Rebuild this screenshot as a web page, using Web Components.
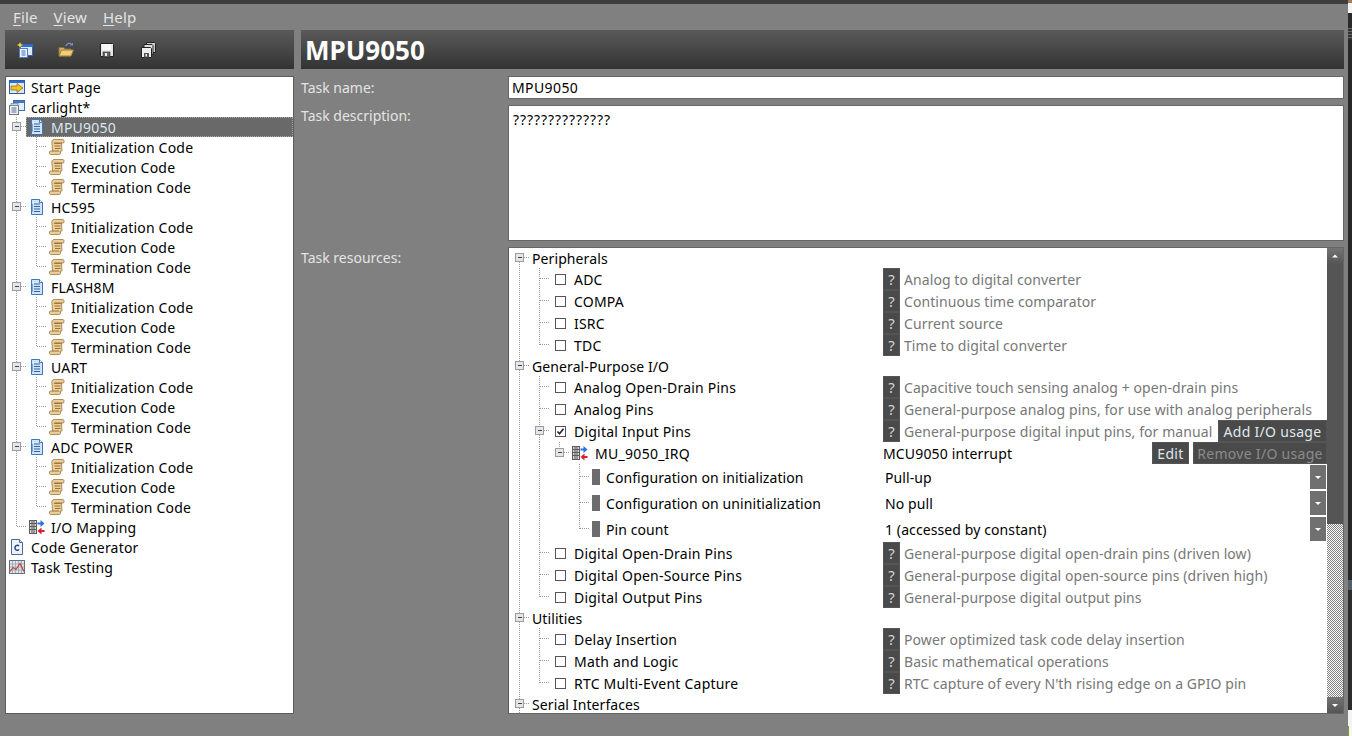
<!DOCTYPE html>
<html>
<head>
<meta charset="utf-8">
<title>MPU9050</title>
<style>
  html, body { margin: 0; height: 100%; overflow: hidden; background: #222; }
  body { font: 14px/20px "Noto Sans", "Liberation Sans", sans-serif; }
</style>
</head>
<body>
<ide-window>
  <ide-menu slot="menu"></ide-menu>
  <ide-toolbar slot="toolbar"></ide-toolbar>
  <ide-title slot="title">MPU9050</ide-title>
  <project-tree slot="tree">
    <tree-row icon="start">Start Page</tree-row>
    <tree-row icon="project">carlight*</tree-row>
    <tree-row guides="+" icon="doc" selected>MPU9050</tree-row>
    <tree-row guides="vT" icon="scroll">Initialization Code</tree-row>
    <tree-row guides="vT" icon="scroll">Execution Code</tree-row>
    <tree-row guides="vL" icon="scroll">Termination Code</tree-row>
    <tree-row guides="+" icon="doc">HC595</tree-row>
    <tree-row guides="vT" icon="scroll">Initialization Code</tree-row>
    <tree-row guides="vT" icon="scroll">Execution Code</tree-row>
    <tree-row guides="vL" icon="scroll">Termination Code</tree-row>
    <tree-row guides="+" icon="doc">FLASH8M</tree-row>
    <tree-row guides="vT" icon="scroll">Initialization Code</tree-row>
    <tree-row guides="vT" icon="scroll">Execution Code</tree-row>
    <tree-row guides="vL" icon="scroll">Termination Code</tree-row>
    <tree-row guides="+" icon="doc">UART</tree-row>
    <tree-row guides="vT" icon="scroll">Initialization Code</tree-row>
    <tree-row guides="vT" icon="scroll">Execution Code</tree-row>
    <tree-row guides="vL" icon="scroll">Termination Code</tree-row>
    <tree-row guides="+" icon="doc">ADC POWER</tree-row>
    <tree-row guides="vT" icon="scroll">Initialization Code</tree-row>
    <tree-row guides="vT" icon="scroll">Execution Code</tree-row>
    <tree-row guides="vL" icon="scroll">Termination Code</tree-row>
    <tree-row guides="L" icon="io">I/O Mapping</tree-row>
    <tree-row icon="code">Code Generator</tree-row>
    <tree-row icon="chart">Task Testing</tree-row>
  </project-tree>
  <task-form slot="form">
    <form-field label="Task name:" height="23" pad="2"><text-box>MPU9050</text-box></form-field>
    <form-field label="Task description:" height="136" pad="1"><text-box multiline>??????????????</text-box></form-field>
    <form-field label="Task resources:" height="467" pad="1">
      <resource-tree>
        <res-group guides="p">Peripherals</res-group>
        <res-item guides="vT" desc="Analog to digital converter">ADC</res-item>
        <res-item guides="vT" desc="Continuous time comparator">COMPA</res-item>
        <res-item guides="vT" desc="Current source">ISRC</res-item>
        <res-item guides="vL" desc="Time to digital converter">TDC</res-item>
        <res-group guides="+">General-Purpose I/O</res-group>
        <res-item guides="vT" desc="Capacitive touch sensing analog + open-drain pins">Analog Open-Drain Pins</res-item>
        <res-item guides="vT" desc="General-purpose analog pins, for use with analog peripherals">Analog Pins</res-item>
        <res-item guides="v+" checked desc="General-purpose digital input pins, for manual">Digital Input Pins<ide-button slot="action" width="109">Add I/O usage</ide-button></res-item>
        <res-pin name="MU_9050_IRQ" note="MCU9050 interrupt"></res-pin>
        <res-config guides="vvbT" value="Pull-up">Configuration on initialization</res-config>
        <res-config guides="vvbT" value="No pull">Configuration on uninitialization</res-config>
        <res-config guides="vvbL" value="1 (accessed by constant)">Pin count</res-config>
        <res-item guides="vT" desc="General-purpose digital open-drain pins (driven low)">Digital Open-Drain Pins</res-item>
        <res-item guides="vT" desc="General-purpose digital open-source pins (driven high)">Digital Open-Source Pins</res-item>
        <res-item guides="vL" desc="General-purpose digital output pins">Digital Output Pins</res-item>
        <res-group guides="+">Utilities</res-group>
        <res-item guides="vT" desc="Power optimized task code delay insertion">Delay Insertion</res-item>
        <res-item guides="vT" desc="Basic mathematical operations">Math and Logic</res-item>
        <res-item guides="vL" desc="RTC capture of every N'th rising edge on a GPIO pin">RTC Multi-Event Capture</res-item>
        <res-group guides="+">Serial Interfaces</res-group>
      </resource-tree>
    </form-field>
  </task-form>
</ide-window>

<script>
// small 16x16 icons, drawn to look like the old toolbar set
const ICONS = {
  start: `<rect x="0.5" y="1.5" width="15" height="13" fill="#dfe8f5" stroke="#2a5cae"/><rect x="1" y="2" width="14" height="2" fill="#2f6bc8"/><path d="M2 7h6V4.5L14 9l-6 4.5V11H2z" fill="#f0c020" stroke="#8a6a10" stroke-width=".7"/>`,
  project: `<rect x="4.5" y="1.5" width="11" height="10" fill="#e3ecf7" stroke="#3f6da8"/><rect x="5" y="2" width="10" height="2" fill="#3f78c6"/><rect x="0.5" y="6.5" width="9" height="9" fill="#eef2f7" stroke="#6c7a8a"/><rect x="2" y="4.5" width="7" height="2" fill="#c8d4e2" stroke="#6c7a8a" stroke-width=".6"/><path d="M2.5 9h5M2.5 11h5M2.5 13h5" stroke="#5a6f8a"/>`,
  doc: `<path d="M2.5.5h8l3 3v12h-11z" fill="#d4e4f8" stroke="#3b78be"/><path d="M10.5.5v3h3" fill="#fff" stroke="#3b78be"/><path d="M5 5h6M5 7.5h6M5 10h6M5 12.5h6" stroke="#2c62a8"/><path d="M3.5 5v8" stroke="#7fa8d8"/>`,
  scroll: `<path d="M5 .5h9c1 0 1.500 2.500.5 3.500h-2l.5 8H11c1 1 .5 3.500-.5 3.500H1.500C.5 15.500 0 13 1 12h2.500L3 4c-.5-1 0-3.500 2-3.500z" fill="#eacf9c" stroke="#b08f58"/><path d="M5.500 4.500h6M5.500 7h6M6 9.500h5.500M5 4h8M3 12h7" stroke="#9a7434"/>`,
  io: `<rect x="0.5" y="1.500" width="7" height="13" fill="#d4d4d4" stroke="#5c5c5c"/><path d="M3 2v12M5 2v12M1 4.500h6M1 7.500h6M1 10.500h6" stroke="#5c5c5c"/><path d="M8.500 3.500h3V1l4 3.500-4 3.500V5.500h-3z" fill="#2f6fe0"/><path d="M15.500 11h-3V8.500l-4 3.500 4 3.500V13h3z" fill="#d8202c"/>`,
  code: `<path d="M2.500.5h8l3 3v12h-11z" fill="#eef3fb" stroke="#4a6a9a"/><path d="M10.500.5v3h3" fill="#cfdcf0" stroke="#4a6a9a"/><path d="M10 7.200C9.400 6.400 8.500 6.200 7.700 6.400 6.300 6.800 5.900 8.200 6 9.300c.1 1.300 1.200 2.100 2.300 2 .7-.1 1.300-.4 1.700-1" fill="none" stroke="#1f3f80" stroke-width="1.400"/>`,
  chart: `<rect x="0.500" y="1.500" width="15" height="13" fill="#dde6f2" stroke="#6a7078"/><path d="M3.500 2v12M6.500 2v12M9.500 2v12M12.500 2v12M1 5h14M1 8h14M1 11h14" stroke="#a4acb6"/><path d="M1 12.500l3-4 3 2 4-6 4 8" fill="none" stroke="#c8403a" stroke-width="1.200"/>`,
  newproject: `<rect x="3.500" y="2.500" width="12" height="11" fill="#dce8f8" stroke="#2f69bd"/><rect x="4" y="3" width="11" height="2" fill="#2f6fd0"/><rect x="2.500" y="6.500" width="8" height="9" fill="#f1f5fb" stroke="#4d7fc0"/><path d="M4.500 9h4M4.500 11h4M4.500 13h4" stroke="#3a6ab0"/><path d="M3 0l.9 2.100L6 3l-2.100.9L3 6l-.9-2.100L0 3l2.100-.9z" fill="#f7d23a"/>`,
  open: `<path d="M1 5.500h5l1 1.500h6v7H1z" fill="#d8b060" stroke="#8a7040"/><path d="M3.500 8h12l-2.500 6H1z" fill="#f2cc78" stroke="#9a7c40"/><path d="M8 4c1-3 4-3.500 5.500-1.500" fill="none" stroke="#7f90c8" stroke-width="1.300"/><path d="M12 3.500h3V.5z" fill="#7f90c8"/>`,
  save: `<path d="M1.500 1.500h12l1 1v12h-13z" fill="#e8e8e8" stroke="#222"/><rect x="3" y="2" width="9" height="6" fill="#f8f8f8"/><rect x="4" y="10" width="7" height="5" fill="#666" stroke="#222" stroke-width=".6"/><rect x="6" y="11" width="2" height="3" fill="#eee"/>`,
  saveall: `<path d="M6.500.5h8l1 1v9h-9z" fill="#ccc" stroke="#222"/><path d="M4 2.500h8l1 1v9H4z" fill="#ddd" stroke="#222"/><path d="M1.500 5.500h9l1 1v9h-10z" fill="#eee" stroke="#222"/><rect x="4" y="11" width="5" height="4.500" fill="#555"/><rect x="5.500" y="12" width="1.500" height="2.500" fill="#eee"/>`,
  arrowUp: `<path d="M8 6.500l3 3H5z" fill="#fff"/>`,
  arrowDown: `<path d="M5 7h6l-3 3z" fill="#fff"/>`,
};

function iconSvg (name, size = 16) {
  return `<svg width="${ size }" height="${ size }" viewBox="0 0 16 16" style="display:block;flex:none">${ ICONS[name] }</svg>`;
}

// one 20px wide cell per guide char:
// v line, T tee, L corner, + box, p box with line below, u box with line above, b blank
function guideCells (guides, h) {
  const top = Math.floor(h / 2) - 1;
  const mid = top + 0.5;
  let out = '';
  [...guides].forEach((c, i) => {
    const x = i * 20 + 10.5;
    const line = (x1, y1, x2, y2) => `<path d="M${ x1 } ${ y1 }L${ x2 } ${ y2 }" stroke="#9a9a9a" stroke-dasharray="1 1"/>`;
    if (c === 'v') out += line(x, 0, x, h);
    if (c === 'T') out += line(x, 0, x, h) + line(x, mid, x + 11, mid);
    if (c === 'L') out += line(x, 0, x, mid) + line(x, mid, x + 11, mid);
    if ('+pu'.includes(c)) {
      if (c !== 'p') out += line(x, 0, x, mid - 4);
      if (c !== 'u') out += line(x, mid + 4, x, h);
      out += line(x + 4, mid, x + 9, mid);
      out += `<rect x="${ x - 4 }" y="${ mid - 4 }" width="8" height="8" fill="#e6e6e6" stroke="#9c9c9c"/>`;
      out += `<path d="M${ x - 2 } ${ mid }h4" stroke="#34406a"/>`;
    }
  });
  return `<svg width="${ guides.length * 20 }" height="${ h }" shape-rendering="crispEdges" style="display:block;flex:none">${ out }</svg>`;
}

// tiny helper so every element below stays a few lines
function define (tag, render) {
  customElements.define(tag, class extends HTMLElement {
    constructor () {
      super();
      this.attachShadow({ mode: 'open' });
    }
    connectedCallback () {
      this.shadowRoot.innerHTML = render(this);
    }
  });
}

define('ide-window', () => `
  <style>
    :host { display: flex; height: 736px; }
    .win { width: 1348px; background: #808080; display: flex; flex-direction: column; flex: none; }
    .top { height: 4px; background: #3d3d3d; }
    .grid { display: grid; grid-template-columns: 289px 1043px; grid-template-rows: 39px 638px; gap: 7px; padding-left: 5px; }
    .side { width: 4px; display: flex; flex-direction: column; }
    .side i { display: block; }
  </style>
  <div class="win">
    <div class="top"></div>
    <slot name="menu"></slot>
    <div class="grid">
      <slot name="toolbar"></slot>
      <slot name="title"></slot>
      <slot name="tree"></slot>
      <slot name="form"></slot>
    </div>
  </div>
  <div class="side">
    <i style="height:3px;background:#a08050"></i>
    <i style="height:10px;background:#f4f4f4"></i>
    <i style="height:15px;background:#2a2a2a"></i>
    <i style="height:12px;background:repeating-linear-gradient(#666 0 1px,#333 1px 3px)"></i>
    <i style="height:540px;background:#282828"></i>
    <i style="height:10px;background:#51606a"></i>
    <i style="height:120px;background:#2c2c2c"></i>
    <i style="height:16px;background:#f4f4f4"></i>
    <i style="flex:1;background:#f4f4f4;border-left:1px solid #6aa820"></i>
  </div>
`);

define('ide-menu', () => `
  <style>
    :host { display: flex; height: 26px; padding-left: 13px; gap: 16px; color: #e4e4e4; align-items: center; font-size: 15px; letter-spacing: .15px; }
    u { text-underline-offset: 2px; }
  </style>
  <span><u>F</u>ile</span><span><u>V</u>iew</span><span><u>H</u>elp</span>
`);

define('ide-toolbar', () => `
  <style>
    :host { display: flex; align-items: center; gap: 25px; padding-left: 12px; background: linear-gradient(#5a5a5a, #333); }
  </style>
  ${ iconSvg('newproject') }${ iconSvg('open') }${ iconSvg('save') }${ iconSvg('saveall') }
`);

define('ide-title', () => `
  <style>
    :host { display: flex; align-items: center; padding-left: 4px; background: linear-gradient(#5a5a5a, #333); color: #fff; font-size: 26px; font-weight: 700; }
  </style>
  <slot></slot>
`);

define('project-tree', () => `
  <style>
    :host { display: block; background: #fff; border: 1px solid #5c5c5c; box-sizing: border-box; overflow: hidden; color: #000; }
  </style>
  <slot></slot>
`);

define('tree-row', (el) => {
  const guides = el.getAttribute('guides') || '';
  const selected = el.hasAttribute('selected');
  return `
    <style>
      :host { display: flex; align-items: center; height: 20px; }
      .body { display: flex; align-items: center; flex: 1; height: 20px; box-sizing: border-box; padding-left: 3px; }
      .sel { background: #696969; color: #d8e6f2; outline: 1px dotted #a8a8a8; outline-offset: -1px; }
      .label { margin-left: 6px; padding-top: 2px; white-space: nowrap; font-size: 14px; letter-spacing: .2px; }
    </style>
    ${ guideCells(guides, 20) }
    <div class="body ${ selected ? 'sel' : '' }">
      ${ iconSvg(el.getAttribute('icon')) }<span class="label"><slot></slot></span>
    </div>`;
});

define('task-form', () => `
  <style>
    :host { display: flex; flex-direction: column; gap: 6px; }
  </style>
  <slot></slot>
`);

define('form-field', (el) => `
  <style>
    :host { display: grid; grid-template-columns: 207px 836px; height: ${ el.getAttribute('height') }px; }
    .label { color: #e4e4e4; padding: ${ el.getAttribute('pad') }px 0 0 0; }
  </style>
  <div class="label">${ el.getAttribute('label') }</div>
  <slot></slot>
`);

define('text-box', (el) => `
  <style>
    :host { display: flex; background: #fff; border: 1px solid #666; box-sizing: border-box; color: #000; padding: ${ el.hasAttribute('multiline') ? '4px 0 0 4px' : '1px 0 0 3px' }; letter-spacing: ${ el.hasAttribute('multiline') ? '.93px' : '.4px' }; }
  </style>
  <slot></slot>
`);

define('resource-tree', () => `
  <style>
    :host { display: flex; background: #fff; border: 1px solid #666; border-left-color: #5a5a5a; box-sizing: border-box; overflow: hidden; color: #000; height: 467px; }
    .rows { width: 818px; flex: none; height: 465px; overflow: hidden; }
    .bar { width: 16px; flex: none; display: flex; flex-direction: column; }
    .btn { height: 16px; background: linear-gradient(#747474, #555); flex: none; }
    .track { height: 260px; background: #555; flex: none; }
    .dither { flex: 1; background: repeating-conic-gradient(#808080 0 25%, #fff 0 50%) 0 0 / 2px 2px; }
  </style>
  <div class="rows"><slot></slot></div>
  <div class="bar">
    <div class="btn">${ iconSvg('arrowUp') }</div>
    <div class="track"></div>
    <div class="dither"></div>
    <div class="btn">${ iconSvg('arrowDown') }</div>
  </div>
`);

define('res-group', (el) => `
  <style>
    :host { display: flex; align-items: center; height: 20px; }
    span { margin-left: 3px; padding-top: 1px; white-space: nowrap; letter-spacing: .1px; }
  </style>
  ${ guideCells(el.getAttribute('guides'), 20) }<span><slot></slot></span>
`);

define('res-item', (el) => {
  const checked = el.hasAttribute('checked');
  return `
    <style>
      :host { display: flex; align-items: center; height: 22px; }
      .left { display: flex; align-items: center; width: 374px; flex: none; }
      .box { width: 11px; height: 11px; border: 1px solid #555; box-sizing: border-box; margin: 0 8px 0 6px; flex: none; display: block; }
      .help { width: 17px; height: 22px; background: #4a4a4a; color: #d4d4d4; text-align: center; line-height: 23px; font-size: 15px; flex: none; box-shadow: inset 0 0 0 1px #555; }
      .desc { color: #777; margin-left: 4px; padding-top: 2px; white-space: nowrap; flex: 1; overflow: hidden; letter-spacing: .08px; }
      .name { white-space: nowrap; padding-top: 1px; letter-spacing: .22px; }
    </style>
    <div class="left">
      ${ guideCells(el.getAttribute('guides'), 22) }
      <svg class="box" viewBox="0 0 9 9">${ checked ? '<path d="M1.500 4.500l2 2.200 4-5" fill="none" stroke="#222" stroke-width="1.600"/>' : '' }</svg>
      <span class="name"><slot></slot></span>
    </div>
    <div class="help">?</div>
    <div class="desc">${ el.getAttribute('desc') }</div>
    <slot name="action"></slot>`;
});

define('ide-button', (el) => `
  <style>
    :host { display: block; flex: none; width: ${ el.getAttribute('width') }px; height: 22px; line-height: 23px; letter-spacing: .3px; background: #4a4a4a; text-align: center; color: ${ el.hasAttribute('disabled') ? '#8a8a8a' : '#dfe8ee' }; box-shadow: inset 0 0 0 1px #555; }
  </style>
  <slot></slot>
`);

define('res-pin', (el) => `
  <style>
    :host { display: flex; align-items: center; height: 22px; }
    .left { display: flex; align-items: center; width: 374px; flex: none; }
    .name { margin-left: 7px; white-space: nowrap; padding-top: 1px; letter-spacing: .3px; }
    .icon { margin-left: 3px; }
    .note { flex: 1; white-space: nowrap; padding-top: 1px; letter-spacing: .15px; }
    .actions { display: flex; gap: 4px; }
  </style>
  <div class="left">
    ${ guideCells('vvu', 22) }
    <span class="icon">${ iconSvg('io') }</span>
    <span class="name">${ el.getAttribute('name') }</span>
  </div>
  <div class="note">${ el.getAttribute('note') }</div>
  <div class="actions">
    <ide-button width="37">Edit</ide-button>
    <ide-button width="134" disabled>Remove I/O usage</ide-button>
  </div>
`);

define('res-config', (el) => `
  <style>
    :host { display: flex; align-items: center; height: 26px; }
    .left { display: flex; align-items: center; width: 374px; flex: none; }
    .mark { width: 8px; height: 16px; background: #6c6c6c; margin: 0 6px 0 3px; flex: none; }
    .label { white-space: nowrap; padding-top: 1px; letter-spacing: .08px; }
    .value { flex: 1; padding: 1px 0 0 2px; white-space: nowrap; letter-spacing: .1px; }
    .drop { width: 16px; height: 24px; background: #707070; margin-right: 1px; display: flex; align-items: center; }
  </style>
  <div class="left">
    ${ guideCells(el.getAttribute('guides'), 26) }
    <span class="mark"></span>
    <span class="label"><slot></slot></span>
  </div>
  <div class="value">${ el.getAttribute('value') }</div>
  <div class="drop">${ iconSvg('arrowDown') }</div>
`);
</script>
</body>
</html>
